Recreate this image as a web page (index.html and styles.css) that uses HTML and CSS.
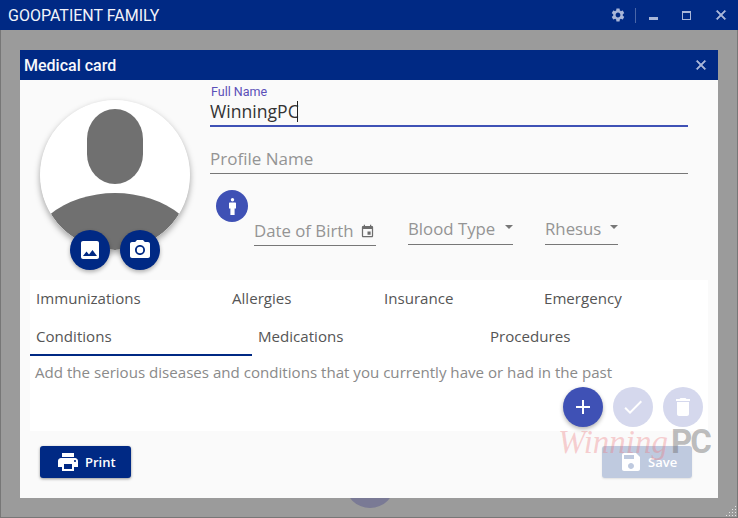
FILE: index.html
```html
<!DOCTYPE html>
<html lang="en">

<head>
    <meta charset="UTF-8">
    <meta name="viewport" content="width=device-width, initial-scale=1.0">
    <title>GooPatient Family</title>
    <link rel="stylesheet" href="styles.css">
</head>

<body>
    <div class="window">
        <div class="titlebar">
            <span class="app-name">GOOPATIENT FAMILY</span>
            <div class="window-buttons">
                <svg class="win-icon gear" viewBox="0 0 24 24"><path d="M19.14 12.94c.04-.3.06-.61.06-.94 0-.32-.02-.64-.07-.94l2.03-1.58c.18-.14.23-.41.12-.61l-1.92-3.32c-.12-.22-.37-.29-.59-.22l-2.39.96c-.5-.38-1.03-.7-1.62-.94l-.36-2.54c-.04-.24-.24-.41-.48-.41h-3.84c-.24 0-.43.17-.47.41l-.36 2.54c-.59.24-1.13.57-1.62.94l-2.39-.96c-.22-.08-.47 0-.59.22L2.74 8.87c-.12.21-.08.47.12.61l2.03 1.58c-.05.3-.09.63-.09.94s.02.64.07.94l-2.03 1.58c-.18.14-.23.41-.12.61l1.92 3.32c.12.22.37.29.59.22l2.39-.96c.5.38 1.03.7 1.62.94l.36 2.54c.05.24.24.41.48.41h3.84c.24 0 .44-.17.47-.41l.36-2.54c.59-.24 1.13-.56 1.62-.94l2.39.96c.22.08.47 0 .59-.22l1.92-3.32c.12-.22.07-.47-.12-.61l-2.01-1.58zM12 15.6c-1.98 0-3.6-1.62-3.6-3.6s1.62-3.6 3.6-3.6 3.6 1.62 3.6 3.6-1.62 3.6-3.6 3.6z"/></svg>
                <span class="win-divider"></span>
                <span class="win-min"></span>
                <span class="win-max"></span>
                <svg class="win-icon close" viewBox="0 0 24 24"><path d="M19 6.41L17.59 5 12 10.59 6.41 5 5 6.41 10.59 12 5 17.59 6.41 19 12 13.41 17.59 19 19 17.59 13.41 12z"/></svg>
            </div>
        </div>

        <div class="backdrop">
            <div class="blob"></div>

            <div class="dialog">
                <div class="dialog-head">
                    <span>Medical card</span>
                    <svg class="win-icon close" viewBox="0 0 24 24"><path d="M19 6.41L17.59 5 12 10.59 6.41 5 5 6.41 10.59 12 5 17.59 6.41 19 12 13.41 17.59 19 19 17.59 13.41 12z"/></svg>
                </div>

                <div class="profile">
                    <div class="avatar">
                        <svg class="avatar-pic" viewBox="0 0 150 150">
                            <clipPath id="round"><circle cx="75" cy="75" r="75"/></clipPath>
                            <g clip-path="url(#round)">
                                <circle cx="75" cy="75" r="75" fill="#fff"/>
                                <rect x="47" y="9" width="56" height="75" rx="28" ry="30" fill="#707070"/>
                                <ellipse cx="75" cy="166" rx="92" ry="73" fill="#707070"/>
                            </g>
                        </svg>
                        <div class="avatar-buttons">
                            <div class="round-btn navy">
                                <svg viewBox="0 0 24 24"><path d="M21 19V5c0-1.1-.9-2-2-2H5c-1.1 0-2 .9-2 2v14c0 1.1.9 2 2 2h14c1.1 0 2-.9 2-2zM8.5 13.5l2.5 3.01L14.5 12l4.5 6H5l3.5-4.5z"/></svg>
                            </div>
                            <div class="round-btn navy">
                                <svg viewBox="0 0 24 24"><circle cx="12" cy="12" r="3.2"/><path d="M9 2L7.17 4H4c-1.1 0-2 .9-2 2v12c0 1.1.9 2 2 2h16c1.1 0 2-.9 2-2V6c0-1.1-.9-2-2-2h-3.17L15 2H9zm3 15c-2.76 0-5-2.24-5-5s2.24-5 5-5 5 2.24 5 5-2.24 5-5 5z"/></svg>
                            </div>
                        </div>
                    </div>

                    <div class="fields">
                        <div class="field-full">
                            <label class="float-label">Full Name</label>
                            <div class="value">WinningPC<span class="caret"></span></div>
                        </div>
                        <div class="field-profile">Profile Name</div>
                        <div class="details">
                            <div class="info-badge">
                                <svg viewBox="0 0 7 17"><circle cx="3.5" cy="1.7" r="1.7"/><path d="M1 4.6h5c.6 0 1 .4 1 1v4.9H5.6V17H1.4v-6.5H0V5.6c0-.6.4-1 1-1z"/></svg>
                            </div>
                            <div class="select dob">
                                <span>Date of Birth</span>
                                <svg viewBox="0 0 24 24"><path d="M17 12h-5v5h5v-5zM16 1v2H8V1H6v2H5c-1.11 0-1.99.9-1.99 2L3 19c0 1.1.89 2 2 2h14c1.1 0 2-.9 2-2V5c0-1.1-.9-2-2-2h-1V1h-2zm3 18H5V8h14v11z"/></svg>
                            </div>
                            <div class="select blood">
                                <span>Blood Type</span>
                                <i class="arrow"></i>
                            </div>
                            <div class="select rhesus">
                                <span>Rhesus</span>
                                <i class="arrow"></i>
                            </div>
                        </div>
                    </div>
                </div>

                <div class="tabs-panel">
                    <div class="tab-row row-one">
                        <div class="tab">Immunizations</div>
                        <div class="tab">Allergies</div>
                        <div class="tab">Insurance</div>
                        <div class="tab">Emergency</div>
                    </div>
                    <div class="tab-row row-two">
                        <div class="tab active">Conditions</div>
                        <div class="tab">Medications</div>
                        <div class="tab">Procedures</div>
                    </div>
                    <p class="tab-text">Add the serious diseases and conditions that you currently have or had in the past</p>
                    <div class="fab-group">
                        <div class="round-btn indigo">
                            <svg viewBox="0 0 24 24"><path d="M19 13h-6v6h-2v-6H5v-2h6V5h2v6h6v2z"/></svg>
                        </div>
                        <div class="round-btn pale">
                            <svg viewBox="0 0 24 24"><path d="M9 16.17L4.83 12l-1.42 1.41L9 19 21 7l-1.41-1.41z"/></svg>
                        </div>
                        <div class="round-btn pale">
                            <svg viewBox="0 0 24 24"><path d="M6 19c0 1.1.9 2 2 2h8c1.1 0 2-.9 2-2V7H6v12zM19 4h-3.5l-1-1h-5l-1 1H5v2h14V4z"/></svg>
                        </div>
                    </div>
                </div>

                <div class="dialog-foot">
                    <button class="btn">
                        <svg viewBox="0 0 24 24"><path d="M19 8H5c-1.66 0-3 1.34-3 3v6h4v4h12v-4h4v-6c0-1.66-1.34-3-3-3zm-3 11H8v-5h8v5zm3-7c-.55 0-1-.45-1-1s.45-1 1-1 1 .45 1 1-.45 1-1 1zm-1-9H6v4h12V3z"/></svg>
                        Print
                    </button>
                    <button class="btn disabled">
                        <svg viewBox="0 0 24 24"><path d="M17 3H5c-1.11 0-2 .9-2 2v14c0 1.1.89 2 2 2h14c1.1 0 2-.9 2-2V7l-4-4zm-5 16c-1.66 0-3-1.34-3-3s1.34-3 3-3 3 1.34 3 3-1.34 3-3 3zm3-10H5V5h10v4z"/></svg>
                        Save
                    </button>
                </div>
            </div>

            <div class="watermark"><span class="wm-script">Winning</span><span class="wm-pc">PC</span></div>
            <div class="grip"></div>
        </div>
    </div>
</body>

</html>
```

FILE: styles.css
```css
* {
    box-sizing: border-box;
}

html,
body {
    margin: 0;
    height: 100%;
    overflow: hidden;
}

body {
    font-family: "Open Sans", "Noto Sans", sans-serif;
    background-color: #9b9b9b;
}

.window {
    height: 518px;
    display: flex;
    flex-direction: column;
    border: 1px solid #777;
    border-top: none;
}

.titlebar {
    height: 30px;
    flex: none;
    margin: 0 -1px;
    padding: 0 9px 0 8px;
    display: flex;
    align-items: center;
    justify-content: space-between;
    background-color: #002984;
    color: #f2f4fa;
    font-family: Roboto, sans-serif;
    font-size: 16px;
}

.window-buttons {
    display: flex;
    align-items: center;
}

.win-icon {
    width: 16px;
    height: 16px;
    fill: #a9b6d8;
    display: block;
}

.close {
    stroke: #a9b6d8;
    stroke-width: 1;
}

.win-divider {
    width: 1px;
    height: 15px;
    margin: 0 13px 0 9px;
    background-color: #4a66a8;
}

.win-min {
    width: 9px;
    height: 3px;
    margin: 6px 24px 0 0;
    background-color: #a9b6d8;
}

.win-max {
    width: 9px;
    height: 9px;
    margin-right: 22px;
    border: 1px solid #a9b6d8;
    border-top-width: 2px;
}

.backdrop {
    position: relative;
    flex: 1;
    padding: 20px 19px 19px;
}

.blob {
    position: absolute;
    left: 344px;
    top: 428px;
    width: 50px;
    height: 50px;
    border-radius: 50%;
    background-color: #7a7a95;
}

.dialog {
    position: relative;
    width: 698px;
    height: 448px;
    display: flex;
    flex-direction: column;
    background-color: #fafafa;
}

.dialog-head {
    height: 30px;
    flex: none;
    padding: 0 9px 0 4px;
    display: flex;
    align-items: center;
    justify-content: space-between;
    background-color: #002984;
    color: #f7f8fc;
    font-family: Roboto, sans-serif;
    font-size: 16px;
    font-weight: 500;
}

.profile {
    height: 200px;
    flex: none;
    display: flex;
}

.avatar {
    position: relative;
    width: 190px;
    padding: 20px 0 0 20px;
    flex: none;
}

.avatar-pic {
    width: 150px;
    height: 150px;
    display: block;
    border-radius: 50%;
    box-shadow: 0 3px 6px rgba(0, 0, 0, 0.35);
}

.avatar-buttons {
    position: absolute;
    left: 50px;
    top: 150px;
    display: flex;
    gap: 10px;
}

.round-btn {
    width: 40px;
    height: 40px;
    border-radius: 50%;
    display: flex;
    align-items: center;
    justify-content: center;
}

.round-btn svg {
    width: 24px;
    height: 24px;
    fill: #fff;
}

.navy {
    background-color: #002984;
    box-shadow: 0 2px 4px rgba(0, 0, 0, 0.3);
}

.indigo {
    background-color: #3f51b5;
    box-shadow: 0 2px 4px rgba(0, 0, 0, 0.3);
}

.pale {
    background-color: #d5d8ed;
}

.fields {
    width: 478px;
    padding-top: 5px;
}

.field-full {
    height: 42px;
    border-bottom: 2px solid #3f51b5;
}

.float-label {
    display: block;
    margin-left: 1px;
    font-family: Roboto, sans-serif;
    font-size: 12.5px;
    line-height: 13px;
    color: #5b4fb8;
}

.value {
    padding-top: 1px;
    font-size: 17.6px;
    line-height: 25px;
    color: #333;
    display: flex;
}

.caret {
    width: 1px;
    height: 21px;
    margin: 2px 0 0 -2px;
    background-color: #222;
}

.field-profile {
    height: 35px;
    margin-top: 12px;
    padding-top: 7px;
    border-bottom: 1px solid #777;
    font-size: 17px;
    line-height: 25px;
    color: #949494;
}

.details {
    position: relative;
    display: flex;
    align-items: flex-start;
    padding: 26px 0 0 44px;
    color: #949494;
    font-size: 16.8px;
}

.info-badge {
    position: absolute;
    left: 6px;
    top: 16px;
    width: 32px;
    height: 32px;
    border-radius: 50%;
    background-color: #3f51b5;
    display: flex;
    align-items: center;
    justify-content: center;
}

.info-badge svg {
    width: 7px;
    height: 17px;
    fill: #fff;
}

.select {
    height: 46px;
    padding-top: 14px;
    margin-top: -1px;
    display: flex;
    align-items: center;
    border-bottom: 1px solid #777;
    white-space: nowrap;
}

.dob {
    width: 122px;
    margin-top: 0;
    padding-top: 16px;
    justify-content: space-between;
}

.dob svg {
    width: 15px;
    height: 15px;
    margin: 2px 1px 0 0;
    fill: #6e6e6e;
}

.blood {
    width: 105px;
    margin-left: 32px;
}

.rhesus {
    width: 73px;
    margin-left: 32px;
}

.arrow {
    width: 0;
    height: 0;
    margin: -3px 0 0 auto;
    border-left: 4px solid transparent;
    border-right: 4px solid transparent;
    border-top: 4px solid #777;
}

.tabs-panel {
    position: relative;
    width: 678px;
    height: 151px;
    margin-left: 10px;
    flex: none;
    background-color: #fff;
    font-size: 15.1px;
    color: #555;
}

.tab-row {
    display: grid;
    height: 38px;
}

.row-one {
    grid-template-columns: 196px 152px 160px 170px;
}

.row-two {
    grid-template-columns: 222px 232px 224px;
}

.tab {
    padding: 8px 6px 0;
    line-height: 20px;
}

.tab.active {
    border-bottom: 2px solid #002984;
}

.tab-text {
    margin: 6px 0 0 5px;
    line-height: 20px;
    color: #8a8a8a;
}

.fab-group {
    position: absolute;
    right: 5px;
    top: 107px;
    display: flex;
    gap: 10px;
}

.dialog-foot {
    flex: 1;
    padding: 15px 26px 0 20px;
    display: flex;
    justify-content: space-between;
    align-items: flex-start;
}

.btn {
    width: 91px;
    height: 32px;
    padding: 0 0 0 16px;
    border: none;
    border-radius: 3px;
    display: flex;
    align-items: center;
    gap: 5px;
    background-color: #002984;
    color: #fff;
    font-family: "Open Sans", sans-serif;
    font-size: 13px;
    font-weight: 600;
    box-shadow: 0 1px 3px rgba(0, 0, 0, 0.4);
}

.btn svg {
    width: 24px;
    height: 24px;
    fill: #fff;
}

.btn.disabled {
    width: 90px;
    padding-left: 17px;
    background-color: #bfcadf;
    box-shadow: 0 1px 2px rgba(0, 0, 0, 0.1);
}

.watermark {
    position: absolute;
    left: 557px;
    top: 392px;
    display: flex;
    align-items: flex-start;
    pointer-events: none;
}

.wm-script {
    font-family: "Liberation Serif", serif;
    font-style: italic;
    font-size: 33px;
    line-height: 40px;
    color: rgba(238, 120, 125, 0.35);
}

.wm-pc {
    margin: 2px 0 0 3px;
    font-family: Roboto, sans-serif;
    font-weight: 700;
    font-size: 33px;
    line-height: 36px;
    letter-spacing: -2px;
    color: rgba(110, 110, 110, 0.45);
}

.grip {
    position: absolute;
    right: 1px;
    bottom: 1px;
    width: 11px;
    height: 11px;
    background-image: radial-gradient(#e4e4e4 1px, transparent 1px);
    background-size: 3px 3px;
    clip-path: polygon(100% 0, 100% 100%, 0 100%);
}
```
